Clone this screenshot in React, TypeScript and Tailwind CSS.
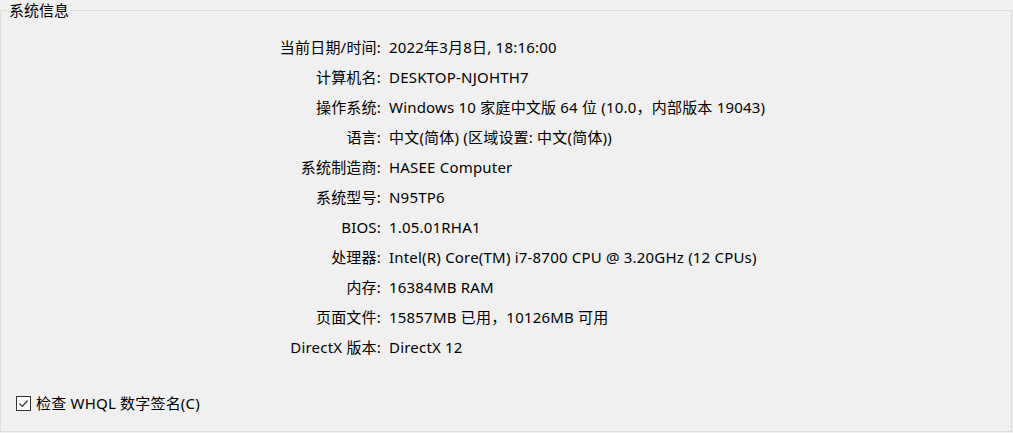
const ROWS: [string, string][] = [
  ["当前日期/时间:", "2022年3月8日, 18:16:00"],
  ["计算机名:", "DESKTOP-NJOHTH7"],
  ["操作系统:", "Windows 10 家庭中文版 64 位 (10.0，内部版本 19043)"],
  ["语言:", "中文(简体) (区域设置: 中文(简体))"],
  ["系统制造商:", "HASEE Computer"],
  ["系统型号:", "N95TP6"],
  ["BIOS:", "1.05.01RHA1"],
  ["处理器:", "Intel(R) Core(TM) i7-8700 CPU @ 3.20GHz (12 CPUs)"],
  ["内存:", "16384MB RAM"],
  ["页面文件:", "15857MB 已用，10126MB 可用"],
  ["DirectX 版本:", "DirectX 12"],
];

export default function App() {
  return (
    <div
      className="h-[433px] w-[1013px] overflow-hidden bg-[#f0f0f0] text-[15px] text-black"
      style={{ fontFamily: '"Noto Sans", "Noto Sans CJK SC", sans-serif' }}
    >
      <fieldset className="m-0 h-[432px] w-[1012px] border border-[#dcdcdc] px-0 pb-0 pt-0">
        <legend className="ml-[6px] px-[2px] leading-[20px]">系统信息</legend>

        {/* info rows */}
        <div className="mt-[12px] grid grid-cols-[380px_1fr] gap-x-[8px] tracking-[0.2px]">
          {ROWS.map(([label, value]) => (
            <div key={label} className="contents">
              <div className="h-[30px] text-right leading-[30px] whitespace-nowrap">{label}</div>
              <div className="h-[30px] leading-[30px] whitespace-nowrap">{value}</div>
            </div>
          ))}
        </div>

        {/* WHQL checkbox */}
        <label className="mt-[31px] ml-[15px] flex items-center gap-[5px] leading-[20px] tracking-[0.2px]">
          <span className="flex h-[15px] w-[15px] items-center justify-center border border-[#333] bg-white">
            <svg width="11" height="11" viewBox="0 0 11 11" fill="none">
              <path d="M1.5 5.5 L4.3 8.3 L9.5 2.5" stroke="#333" strokeWidth="1.2" />
            </svg>
          </span>
          <span>检查 WHQL 数字签名(C)</span>
        </label>
      </fieldset>
    </div>
  );
}
